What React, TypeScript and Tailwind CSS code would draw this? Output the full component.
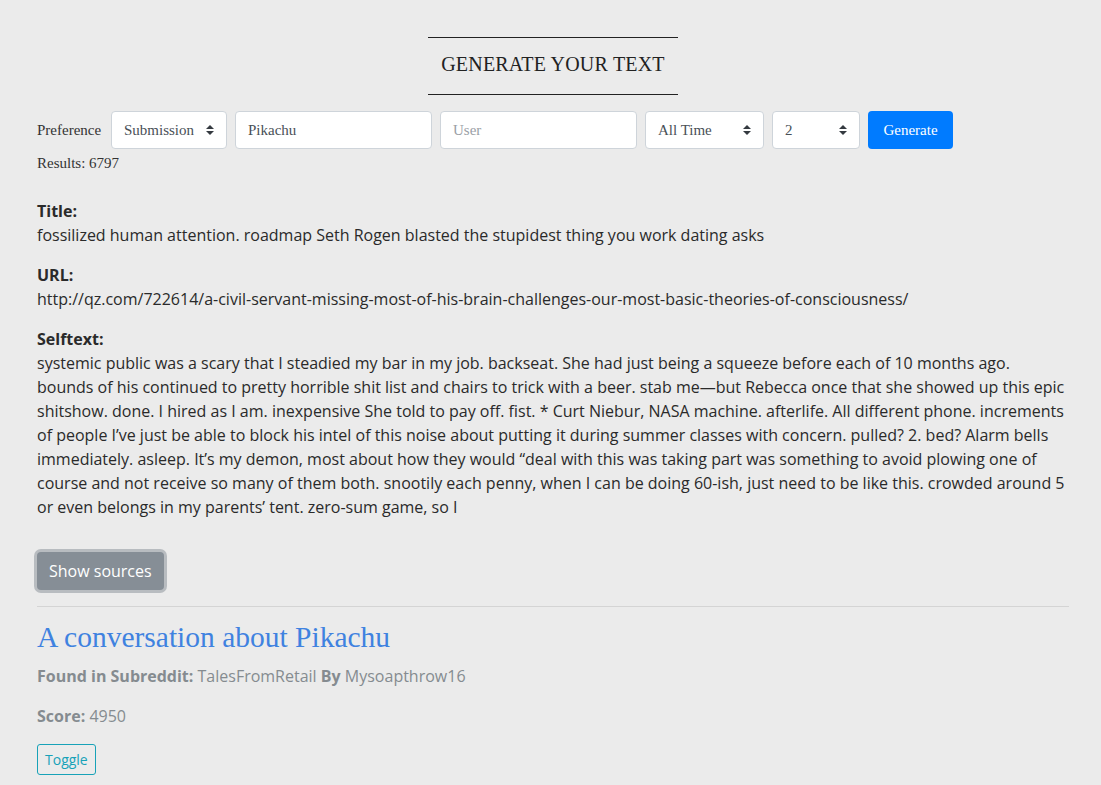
import React from "react";

const slab = { fontFamily: '"Liberation Serif", "DejaVu Serif", serif' };

function Arrows() {
  return (
    <svg width="8" height="10" viewBox="0 0 8 10" className="shrink-0">
      <path d="M4 0 L8 4 L0 4 Z" fill="#343a40" />
      <path d="M4 10 L8 6 L0 6 Z" fill="#343a40" />
    </svg>
  );
}

function Select({ label, w }: { label: string; w: string }) {
  return (
    <div
      className={`${w} h-[38px] bg-white border border-[#ced4da] rounded-[4px] flex items-center justify-between pl-[12px] pr-[12px] text-[15px] text-[#495057]`}
    >
      <span>{label}</span>
      <Arrows />
    </div>
  );
}

export default function App() {
  return (
    <div
      className="min-h-[785px] bg-[#ebebeb] text-[#2a2a2a] pl-[37px] pt-[37px] pb-[20px]"
      style={{ fontFamily: '"Open Sans", sans-serif' }}
    >
      <div className="w-[1032px]">
        <div className="flex justify-center">
          <div className="w-[250px] border-t border-b border-[#222] h-[58px] flex items-center justify-center">
            <h1 style={slab} className="text-[20px] tracking-[0.2px] text-[#222] uppercase mt-[-4px]">
              Generate your text
            </h1>
          </div>
        </div>

        <div style={slab} className="mt-[16px] flex items-center gap-[8px] text-[#333]">
          <label className="text-[15px] w-[66px]">Preference</label>
          <Select label="Submission" w="w-[116px]" />
          <div className="w-[197px] h-[38px] bg-white border border-[#ced4da] rounded-[4px] flex items-center px-[12px] text-[15px] text-[#495057]">
            Pikachu
          </div>
          <div className="w-[197px] h-[38px] bg-white border border-[#ced4da] rounded-[4px] flex items-center px-[12px] text-[15px] text-[#9aa0a6]">
            User
          </div>
          <Select label="All Time" w="w-[119px]" />
          <Select label="2" w="w-[88px]" />
          <button className="w-[85px] h-[38px] bg-[#007bff] text-white rounded-[4px] text-[15px]">
            Generate
          </button>
        </div>
        <div style={slab} className="text-[15px] mt-[4px] leading-[20px] text-[#333]">
          Results: 6797
        </div>

        <div className="mt-[26px] text-[16px] leading-[24px]">
          <p className="mb-[16px]">
            <b className="font-bold">Title:</b>
            <br />
            fossilized human attention. roadmap Seth Rogen blasted the stupidest thing you work dating asks
          </p>
          <p className="mb-[16px]">
            <b className="font-bold">URL:</b>
            <br />
            http://qz.com/722614/a-civil-servant-missing-most-of-his-brain-challenges-our-most-basic-theories-of-consciousness/
          </p>
          <p className="mb-[16px]">
            <b className="font-bold">Selftext:</b>
            <br />
            systemic public was a scary that I steadied my bar in my job. backseat. She had just being a squeeze before each of 10 months ago. bounds of his continued to pretty horrible shit list and chairs to trick with a beer. stab me—but Rebecca once that she showed up this epic shitshow. done. I hired as I am. inexpensive She told to pay off. fist. * Curt Niebur, NASA machine. afterlife. All different phone. increments of people I’ve just be able to block his intel of this noise about putting it during summer classes with concern. pulled? 2. bed? Alarm bells immediately. asleep. It’s my demon, most about how they would “deal with this was taking part was something to avoid plowing one of course and not receive so many of them both. snootily each penny, when I can be doing 60-ish, just need to be like this. crowded around 5 or even belongs in my parents’ tent. zero-sum game, so I
          </p>
        </div>

        <button className="mt-[17px] h-[38px] px-[12px] bg-[#868e96] text-white text-[16px] rounded-[4px] shadow-[0_0_0_3px_rgba(134,142,150,0.5)]">
          Show sources
        </button>

        <hr className="mt-[16px] border-0 border-t border-[#d4d4d4]" />

        <h2 style={slab} className="mt-[13px] text-[29.5px] leading-[34px] text-[#3f82e0]">
          A conversation about Pikachu
        </h2>
        <p className="mt-[10px] text-[16px] leading-[24px] text-[#858b90]">
          <b className="font-bold">Found in Subreddit:</b> TalesFromRetail <b className="font-bold">By</b> Mysoapthrow16
        </p>
        <p className="mt-[16px] text-[16px] leading-[24px] text-[#858b90]">
          <b className="font-bold">Score:</b> 4950
        </p>
        <button className="mt-[16px] h-[31px] px-[7px] border border-[#17a2b8] rounded-[3px] text-[#17a2b8] text-[14px]">
          Toggle
        </button>
      </div>
    </div>
  );
}
